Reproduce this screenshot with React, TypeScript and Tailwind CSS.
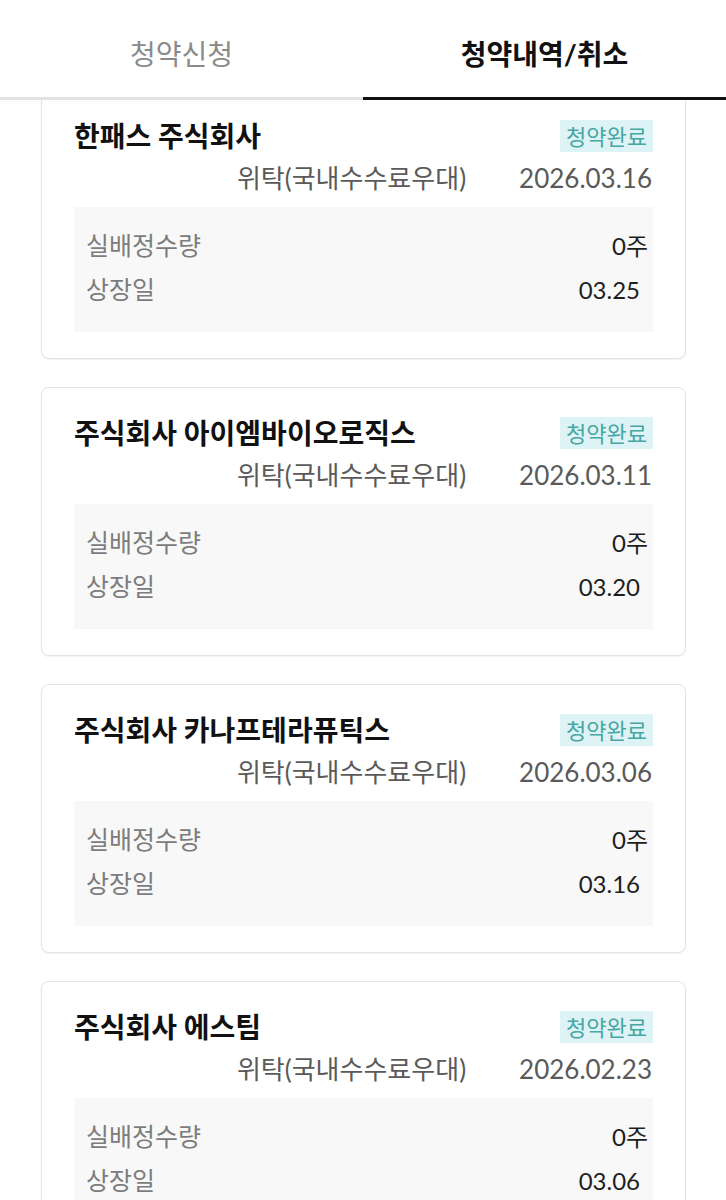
import React from 'react'

// Subscription history list (청약내역/취소 tab selected)

type Item = {
  name: string
  account: string
  date: string
  qty: string
  listing: string
}

const items: Item[] = [
  { name: '한패스 주식회사', account: '위탁(국내수수료우대)', date: '2026.03.16', qty: '0주', listing: '03.25' },
  { name: '주식회사 아이엠바이오로직스', account: '위탁(국내수수료우대)', date: '2026.03.11', qty: '0주', listing: '03.20' },
  { name: '주식회사 카나프테라퓨틱스', account: '위탁(국내수수료우대)', date: '2026.03.06', qty: '0주', listing: '03.16' },
  { name: '주식회사 에스팀', account: '위탁(국내수수료우대)', date: '2026.02.23', qty: '0주', listing: '03.06' },
]

const font = { fontFamily: 'Lato, "Noto Sans CJK KR", sans-serif' }

export default function App() {
  return (
    <div className="relative h-[1200px] overflow-hidden bg-white" style={font}>
      {/* Tabs sit over the scrolled list */}
      <div className="absolute inset-x-0 top-0 z-10 bg-white">
        <div className="flex h-[97px]">
          <div className="flex flex-1 items-center justify-center pt-[10px] text-[28px] text-[#8a8a8a]">
            청약신청
          </div>
          <div className="flex flex-1 items-center justify-center pt-[10px] text-[28px] font-bold text-[#111]">
            청약내역/취소
          </div>
        </div>
        <div className="flex h-[3px]">
          <div className="flex-1 bg-[#e2e2e2]" />
          <div className="flex-1 bg-[#111]" />
        </div>
      </div>

      {/* Card list, scrolled so the first card's top is under the tabs */}
      <div className="flex flex-col gap-[28px] pt-[90px] pl-[41px] pr-10">
        {items.map((it) => (
          <Card key={it.name} item={it} />
        ))}
      </div>
    </div>
  )
}

function Card({ item }: { item: Item }) {
  return (
    <div className="flex h-[269px] shrink-0 flex-col rounded-lg border border-[#e4e4e4] bg-white px-8 pt-[23px] shadow-[0_1px_2px_rgba(0,0,0,0.06)]">
      <div className="flex h-[44px] items-center justify-between">
        <span className="text-[28px] font-bold leading-none text-[#111]">{item.name}</span>
        <span className="flex h-[32px] items-center bg-[#def3f5] px-[6px] text-[22px] text-[#46a7a4]">
          청약완료
        </span>
      </div>
      <div className="flex h-[40px] items-center justify-end gap-[53px] text-[26px] text-[#5a5a5a]">
        <span>{item.account}</span>
        <span className="pr-px">{item.date}</span>
      </div>
      <div className="mt-[9px] flex h-[125px] flex-col bg-[#f8f8f8] pt-[17px] pl-3 pr-[5px]">
        <div className="flex h-[44px] items-center justify-between text-[24px]">
          <span className="text-[25px] text-[#7c7c7c]">실배정수량</span>
          <span className="text-[#1e1e1e]">{item.qty}</span>
        </div>
        <div className="flex h-[44px] items-center justify-between text-[24px]">
          <span className="text-[25px] text-[#7c7c7c]">상장일</span>
          <span className="mr-2 text-[#1e1e1e]">{item.listing}</span>
        </div>
      </div>
    </div>
  )
}
